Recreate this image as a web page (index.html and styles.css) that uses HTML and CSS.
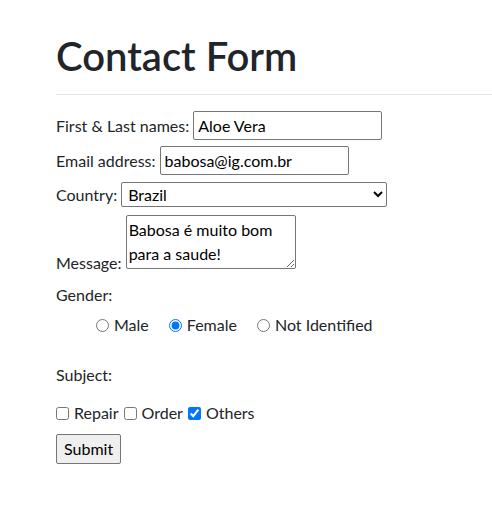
FILE: index.html
```html
<!DOCTYPE html>
<html lang="en">
<head>
<meta charset="utf-8">
<title>Contact Form</title>
<link rel="stylesheet" href="styles.css">
</head>
<body>
<main class="page">
  <h1 class="title">Contact Form</h1>
  <hr class="rule">
  <form class="form">
    <div class="row row-name">
      <label for="name">First &amp; Last names:</label>
      <input id="name" class="text-input" type="text" value="Aloe Vera">
    </div>
    <div class="row row-email">
      <label for="email">Email address:</label>
      <input id="email" class="text-input" type="email" value="babosa@ig.com.br">
    </div>
    <div class="row row-country">
      <label for="country">Country:</label>
      <select id="country" class="select">
        <option selected>Brazil</option>
        <option>Portugal</option>
        <option>Argentina</option>
      </select>
    </div>
    <div class="row-message">
      <label for="msg">Message:</label>
      <textarea id="msg" class="textarea" spellcheck="true">Babosa é muito bom para a saude!</textarea>
    </div>
    <div class="gender-label">Gender:</div>
    <div class="radios">
      <label class="choice"><input type="radio" name="gender" class="radio"> Male</label>
      <label class="choice"><input type="radio" name="gender" class="radio" checked> Female</label>
      <label class="choice"><input type="radio" name="gender" class="radio"> Not Identified</label>
    </div>
    <div class="subject-label">Subject:</div>
    <div class="checks">
      <label class="check"><input type="checkbox" class="checkbox"> Repair</label>
      <label class="check"><input type="checkbox" class="checkbox"> Order</label>
      <label class="check"><input type="checkbox" class="checkbox" checked> Others</label>
    </div>
    <div class="actions">
      <button type="button" class="submit">Submit</button>
    </div>
  </form>
</main>
</body>
</html>
```

FILE: styles.css
```css
html, body {
  margin: 0;
  padding: 0;
  background: #ffffff;
}

body {
  font-family: Lato, "Open Sans", "Liberation Sans", sans-serif;
  font-size: 16px;
  line-height: 24px;
  color: #212529;
}

.page {
  padding: 32px 0 0 56px;
}

.title {
  margin: 0;
  font-size: 40px;
  line-height: 48px;
  font-weight: 600;
  color: #212529;
}

.rule {
  margin: 14px 0 0 0;
  border: 0;
  border-top: 1px solid #e5e5e5;
  height: 0;
}

.form {
  margin: 0;
}

.row {
  display: flex;
  align-items: baseline;
  gap: 4px;
}

.row-name { margin-top: 16px; }
.row-email { margin-top: 6px; }
.row-country { margin-top: 7px; align-items: center; }

.text-input {
  box-sizing: border-box;
  width: 189px;
  height: 29px;
  margin: 0;
  padding: 1px 4px;
  border: 1px solid #767676;
  border-radius: 2px;
  font: inherit;
  line-height: 24px;
  color: #000;
  background: #fff;
}

.select {
  box-sizing: border-box;
  width: 266px;
  height: 25px;
  margin: 0;
  padding: 0 2px;
  border: 1px solid #767676;
  border-radius: 2px;
  font: inherit;
  color: #000;
  background: #fff;
}

.row-message {
  margin-top: 8px;
}

.textarea {
  box-sizing: border-box;
  width: 170px;
  height: 54px;
  margin: 0;
  padding: 2px;
  border: 1px solid #767676;
  border-radius: 2px;
  font: inherit;
  line-height: 24px;
  color: #000;
  vertical-align: baseline;
  resize: both;
  overflow: hidden;
}

.gender-label { margin-top: 8px; }

.radios {
  margin-top: 6px;
  padding-left: 40px;
  display: flex;
  gap: 20px;
}

.choice {
  display: flex;
  align-items: center;
  gap: 5px;
}

.radio {
  margin: 0;
  width: 13px;
  height: 13px;
}

.subject-label { margin-top: 26px; }

.checks {
  margin-top: 14px;
  display: flex;
  gap: 5px;
}

.check {
  display: flex;
  align-items: center;
  gap: 5px;
}

.checkbox {
  margin: 0;
  width: 13px;
  height: 13px;
}

.actions {
  margin-top: 9px;
}

.submit {
  box-sizing: border-box;
  height: 30px;
  margin: 0;
  padding: 1px 7px;
  border: 1px solid #767676;
  border-radius: 2px;
  background: #efefef;
  font: inherit;
  line-height: 24px;
  color: #000;
}
```
